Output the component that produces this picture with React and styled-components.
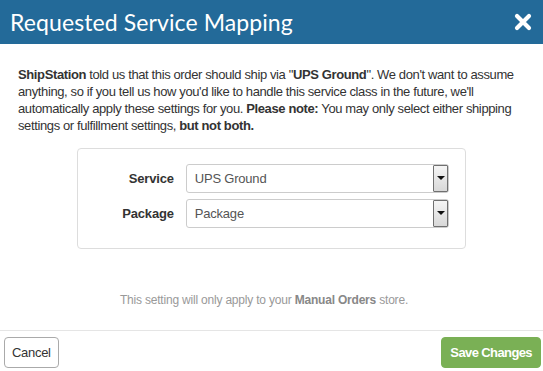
import React from 'react'
import styled, { createGlobalStyle } from 'styled-components'

const GlobalStyle = createGlobalStyle`
    html, body {
        margin: 0;
        padding: 0;
        background: #fff;
    }
    body {
        font-family: "Liberation Sans", Arial, sans-serif;
        font-size: 13px;
        color: #333;
    }
`

const Modal = () => {
    return (
        <Container>
            <GlobalStyle />
            <Header>
                <h1>Requested Service Mapping</h1>
                <CloseButton aria-label='Close'>
                    <svg width='18' height='18' viewBox='0 0 18 18'>
                        <path d='M3 3 L15 15 M15 3 L3 15' stroke='#fff' strokeWidth='4.2' strokeLinecap='round' />
                    </svg>
                </CloseButton>
            </Header>
            <Body>
                <Intro>
                    <b>ShipStation</b> told us that this order should ship via "<b>UPS Ground</b>". We don't want to assume anything, so if you tell us how you'd like to handle this service class in the future, we'll automatically apply these settings for you. <b>Please note:</b> You may only select either shipping settings or fulfillment settings, <b>but not both.</b>
                </Intro>
                <Panel>
                    <FieldRow>
                        <label>Service</label>
                        <Select>
                            <span>UPS Ground</span>
                            <Arrow />
                        </Select>
                    </FieldRow>
                    <FieldRow>
                        <label>Package</label>
                        <Select>
                            <span>Package</span>
                            <Arrow />
                        </Select>
                    </FieldRow>
                </Panel>
                <Note>
                    This setting will only apply to your <b>Manual Orders</b> store.
                </Note>
            </Body>
            <Footer>
                <Button>Cancel</Button>
                <Button primary>Save Changes</Button>
            </Footer>
        </Container>
    )
}

export default Modal

const Container = styled.div`
    width: 543px;
    height: 371px;
    display: flex;
    flex-direction: column;
    background: #fff;
`

const Header = styled.div`
    height: 44px;
    flex-shrink: 0;
    background: #236a99;
    display: flex;
    align-items: center;
    justify-content: space-between;
    padding: 0 11px 0 10px;
    box-sizing: border-box;

    h1 {
        margin: 0;
        color: #fff;
        font-family: Lato, "Open Sans", sans-serif;
        font-weight: 400;
        font-size: 23px;
        letter-spacing: 0.1px;
    }
`

const CloseButton = styled.div`
    width: 18px;
    height: 18px;
    display: flex;
`

const Body = styled.div`
    flex: 1;
    padding: 22px 18px 0 18px;
`

const Intro = styled.p`
    margin: 0;
    line-height: 17px;
    font-size: 13px;
    color: #333;
    letter-spacing: -0.38px;
`

const Panel = styled.div`
    width: 389px;
    height: 101px;
    box-sizing: border-box;
    margin: 14px 0 0 59px;
    border: 1px solid #ddd;
    border-radius: 4px;
    padding: 15px 16px 0 0;
    display: flex;
    flex-direction: column;
    gap: 6px;
`

const FieldRow = styled.div`
    display: flex;
    align-items: center;

    label {
        width: 96px;
        text-align: right;
        font-weight: bold;
        font-size: 13px;
        color: #333;
        margin-right: 12px;
        letter-spacing: -0.2px;
    }
`

const Select = styled.div`
    width: 264px;
    height: 29px;
    box-sizing: border-box;
    border: 1px solid #ccc;
    border-radius: 3px;
    display: flex;
    align-items: center;
    justify-content: space-between;
    padding-left: 8px;
    font-size: 13px;
    color: #555;
    letter-spacing: -0.2px;
`

const Arrow = styled.div`
    width: 15px;
    height: 27px;
    box-sizing: border-box;
    border: 1px solid #707070;
    border-radius: 1px;
    background: linear-gradient(#f5f5f5, #d8d8d8);
    position: relative;

    &::after {
        content: '';
        position: absolute;
        left: 3px;
        top: 10px;
        border-left: 4px solid transparent;
        border-right: 4px solid transparent;
        border-top: 4px solid #111;
    }
`

const Note = styled.div`
    margin: 44px 15px 0 0;
    text-align: center;
    font-size: 12px;
    color: #999;
    letter-spacing: -0.2px;

    b {
        color: #888;
    }
`

const Footer = styled.div`
    height: 41px;
    flex-shrink: 0;
    box-sizing: border-box;
    border-top: 1px solid #e5e5e5;
    display: flex;
    justify-content: space-between;
    align-items: flex-start;
    padding: 6px 2px 0 4px;
`

const Button = styled.div`
    height: 31px;
    box-sizing: border-box;
    display: flex;
    align-items: center;
    padding: 0 ${p => (p.primary ? '8px' : '7px')};
    border-radius: 4px;
    font-size: 13px;
    letter-spacing: ${p => (p.primary ? '-0.6px' : '-0.3px')};
    border: 1px solid ${p => (p.primary ? '#7ab055' : '#aaa')};
    background: ${p => (p.primary ? '#7ab055' : '#fff')};
    color: ${p => (p.primary ? '#fff' : '#333')};
    font-weight: ${p => (p.primary ? 'bold' : 'normal')};
`
